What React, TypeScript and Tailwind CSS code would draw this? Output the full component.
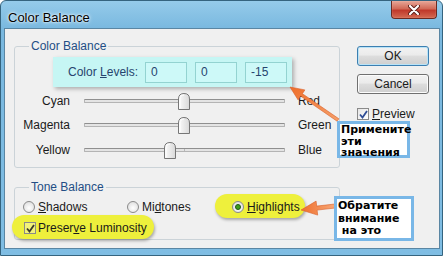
import React from "react";

const font = { fontFamily: '"Liberation Sans", Arial, sans-serif' };

function Thumb() {
  return (
    <svg width="12" height="17" viewBox="0 0 12 17" className="absolute top-[-7px]">
      <defs>
        <linearGradient id="tg" x1="0" y1="0" x2="1" y2="0">
          <stop offset="0" stopColor="#fbfbfb" />
          <stop offset="1" stopColor="#d9d9d9" />
        </linearGradient>
      </defs>
      <path d="M0.5 16.5 V6 Q0.5 0.5 6 0.5 Q11.5 0.5 11.5 6 V16.5 Z" fill="url(#tg)" stroke="#767676" />
      <path d="M2 15 V6.5 Q2 2 6 2" fill="none" stroke="#ffffff" strokeWidth="1" />
    </svg>
  );
}

function SliderRow({ left, right, pos, tick }: { left: string; right: string; pos: number; tick?: boolean }) {
  return (
    <div className="flex items-center h-[24px]">
      <div className="w-[55px] text-right text-[12px] text-[#1a1a1a] leading-[14px]">{left}</div>
      <div className="relative ml-[14px] w-[201px] h-[4px] bg-[#e4e4e4] border border-[#b4b4b4] border-t-[#8f8f8f] rounded-[1px]">
        {tick && <div className="absolute left-[99px] top-0 w-px h-[2px] bg-[#b8b8b8]" />}
        <div className="absolute top-0" style={{ left: pos }}>
          <Thumb />
        </div>
      </div>
      <div className="ml-[13px] text-[12px] text-[#1a1a1a] leading-[14px]">{right}</div>
    </div>
  );
}

function Radio({ checked }: { checked?: boolean }) {
  return (
    <span className="relative inline-flex items-center justify-center w-[12px] h-[12px] rounded-full border border-[#8a8a8a] bg-[radial-gradient(circle_at_50%_60%,#ffffff,#d8d8d8)] shrink-0">
      {checked && <span className="w-[6px] h-[6px] rounded-full bg-[#3f9d1e] border border-[#1f5a10]" />}
    </span>
  );
}

function Check({ tint }: { tint?: string }) {
  return (
    <span
      className={
        "inline-flex items-center justify-center w-[12px] h-[12px] border border-[#8a8a8a] shrink-0 " +
        (tint === "yellow" ? "bg-[#f2f27a]" : "bg-[linear-gradient(135deg,#e6e6e6,#ffffff)]")
      }
    >
      <svg width="9" height="9" viewBox="0 0 9 9">
        <path
          d="M1 4.5 L3.5 7.5 L8 1"
          fill="none"
          stroke={tint === "yellow" ? "#3a3a2a" : "#2f4d95"}
          strokeWidth="1.8"
        />
      </svg>
    </span>
  );
}

export default function App() {
  return (
    <div
      className="relative w-[443px] h-[256px] overflow-hidden border border-[#35647f] rounded-t-[6px] bg-[linear-gradient(to_bottom,#95cbea,#79b8df_28px,#7fbde3)]"
      style={font}
    >
      {/* title bar */}
      <div className="flex items-start justify-between h-[27px] pl-[7px] pr-[5px]">
        <div className="mt-[9px] text-[13px] leading-[15px] text-black [text-shadow:0_0_4px_#ffffff,0_0_2px_#ffffff]">
          Color Balance
        </div>
        <div className="flex items-center justify-center w-[46px] h-[18px] rounded-b-[4px] border border-t-0 border-[#6b2a22] bg-[linear-gradient(to_bottom,#e7a798,#d16a57_45%,#c0392b_55%,#d46a52)] shadow-[inset_0_0_1px_#ffd0c0]">
          <svg width="12" height="10" viewBox="0 0 12 10">
            <path d="M2 1 L10 9 M10 1 L2 9" stroke="#5a1d16" strokeWidth="4" strokeLinecap="round" />
            <path d="M2 1 L10 9 M10 1 L2 9" stroke="#ffffff" strokeWidth="2.2" strokeLinecap="round" />
          </svg>
        </div>
      </div>

      {/* client */}
      <div className="ml-[3px] mr-[2px] h-[221px] border border-[#5a86a3] bg-[#f0f0f0] flex">
        {/* left column */}
        <div className="pl-[9px] pt-[10px]">
          <fieldset className="w-[326px] h-[129px] border border-[#cbd3d8] rounded-[3px]">
            <legend className="ml-[14px] px-[2px] text-[12px] leading-[14px] text-[#234e85]">Color Balance</legend>
            <div className="mt-[4px] ml-[38px] w-[239px] h-[30px] flex items-center bg-[#c6f6f4] shadow-[2px_2px_4px_rgba(0,0,0,0.28)]">
              <div className="ml-[15px] w-[77px] text-[12px] leading-[14px] text-[#27446e] whitespace-nowrap">
                Color <u>L</u>evels:
              </div>
              <div className="flex gap-[8px]">
                {["0", "0", "-15"].map((v, i) => (
                  <div
                    key={i}
                    className="w-[42px] h-[21px] border border-[#93d3d1] bg-[#cdf9f8] pl-[5px] flex items-center text-[12px] text-[#27446e]"
                  >
                    {v}
                  </div>
                ))}
              </div>
            </div>
            <div className="mt-[2px]">
              <SliderRow left="Cyan" right="Red" pos={93} />
              <SliderRow left="Magenta" right="Green" pos={93} />
              <div className="mt-[1px]">
                <SliderRow left="Yellow" right="Blue" pos={79} tick />
              </div>
            </div>
          </fieldset>

          <fieldset className="mt-[12px] w-[326px] h-[60px] border border-[#cbd3d8] rounded-[3px]">
            <legend className="ml-[14px] px-[2px] text-[12px] leading-[14px] text-[#234e85]">Tone Balance</legend>
            <div className="mt-[6px] pl-[8px] flex items-center h-[14px] text-[12px] leading-[14px] text-[#1a1a1a]">
              <div className="w-[104px] flex items-center gap-[3px]">
                <Radio />
                <span>
                  <u>S</u>hadows
                </span>
              </div>
              <div className="w-[105px] flex items-center gap-[3px]">
                <Radio />
                <span>
                  Mi<u>d</u>tones
                </span>
              </div>
              <div className="relative isolate flex items-center gap-[3px]">
                <span className="absolute -z-10 left-[-17px] right-[-5px] top-[-6px] bottom-[-4px] rounded-full bg-[#eef03c] shadow-[1px_2px_3px_rgba(0,0,0,0.3)]" />
                <Radio checked />
                <span>
                  <u>H</u>ighlights
                </span>
              </div>
            </div>
            <div className="mt-[7px] pl-[9px] flex h-[14px] items-center text-[12px] leading-[14px] text-[#1a1a1a]">
              <div className="relative isolate flex items-center gap-[2px]">
                <span className="absolute -z-10 left-[-12px] right-[-7px] top-[-6px] bottom-[-4px] rounded-full bg-[#eef03c] shadow-[1px_2px_3px_rgba(0,0,0,0.3)]" />
                <Check tint="yellow" />
                <span>
                  Preser<u>v</u>e Luminosity
                </span>
              </div>
            </div>
          </fieldset>
        </div>

        {/* right column */}
        <div className="ml-[17px] pt-[17px] flex flex-col">
          <div className="w-[72px] h-[20px] rounded-[3px] border border-[#3c7fb1] bg-[linear-gradient(to_bottom,#f2f2f2,#ebebeb_45%,#dddddd_50%,#cfcfcf)] shadow-[inset_0_0_0_1px_#b9e3f7] flex items-center justify-center text-[12px] text-[#1a1a1a]">
            OK
          </div>
          <div className="mt-[8px] w-[72px] h-[20px] rounded-[3px] border border-[#707070] bg-[linear-gradient(to_bottom,#f2f2f2,#ebebeb_45%,#dddddd_50%,#cfcfcf)] shadow-[inset_0_0_0_1px_#fcfcfc] flex items-center justify-center text-[12px] text-[#1a1a1a]">
            Cancel
          </div>
          <div className="mt-[12px] flex items-center gap-[3px] h-[16px] text-[12px] text-[#1a1a1a]">
            <Check />
            <span>
              <u>P</u>review
            </span>
          </div>
        </div>
      </div>

      {/* annotation arrows */}
      <svg className="absolute inset-0 pointer-events-none" width="443" height="256" viewBox="0 0 443 256">
        <defs>
          <linearGradient id="ar1" x1="0" y1="0" x2="1" y2="1">
            <stop offset="0" stopColor="#ef6f2c" />
            <stop offset="1" stopColor="#f5a06a" />
          </linearGradient>
          <linearGradient id="ar2" x1="0" y1="0" x2="1" y2="0">
            <stop offset="0" stopColor="#ef6f2c" />
            <stop offset="1" stopColor="#f7a878" />
          </linearGradient>
        </defs>
        <polygon
          points="289,86 303.9,88.9 301.4,92.7 337.9,117.8 336.1,120.2 299.6,95.1 297.1,98.9"
          fill="url(#ar1)"
          stroke="#d8602a"
          strokeWidth="0.6"
        />
        <polygon
          points="300,209 315.1,200.1 315.7,205.1 333.8,203 334.2,207 316.1,209.1 316.7,214.1"
          fill="url(#ar2)"
          stroke="#d8602a"
          strokeWidth="0.6"
        />
      </svg>

      {/* annotation boxes */}
      <div
        className="absolute left-[336px] top-[120px] w-[73px] h-[37px] bg-white border-[3px] border-[#79b7e7] pl-[1px] text-[11px] leading-[11.5px] font-bold text-black"
        style={{ fontFamily: '"DejaVu Sans", Verdana, sans-serif' }}
      >
        Примените
        <br />
        эти
        <br />
        значения
      </div>
      <div
        className="absolute left-[333px] top-[195px] w-[80px] h-[45px] bg-white border-[3px] border-[#79b7e7] pl-[1px] pt-[1px] text-[11px] leading-[12.5px] font-bold text-black whitespace-pre"
        style={{ fontFamily: '"DejaVu Sans", Verdana, sans-serif' }}
      >
        {"Обратите\nвнимание\n на это"}
      </div>
    </div>
  );
}
